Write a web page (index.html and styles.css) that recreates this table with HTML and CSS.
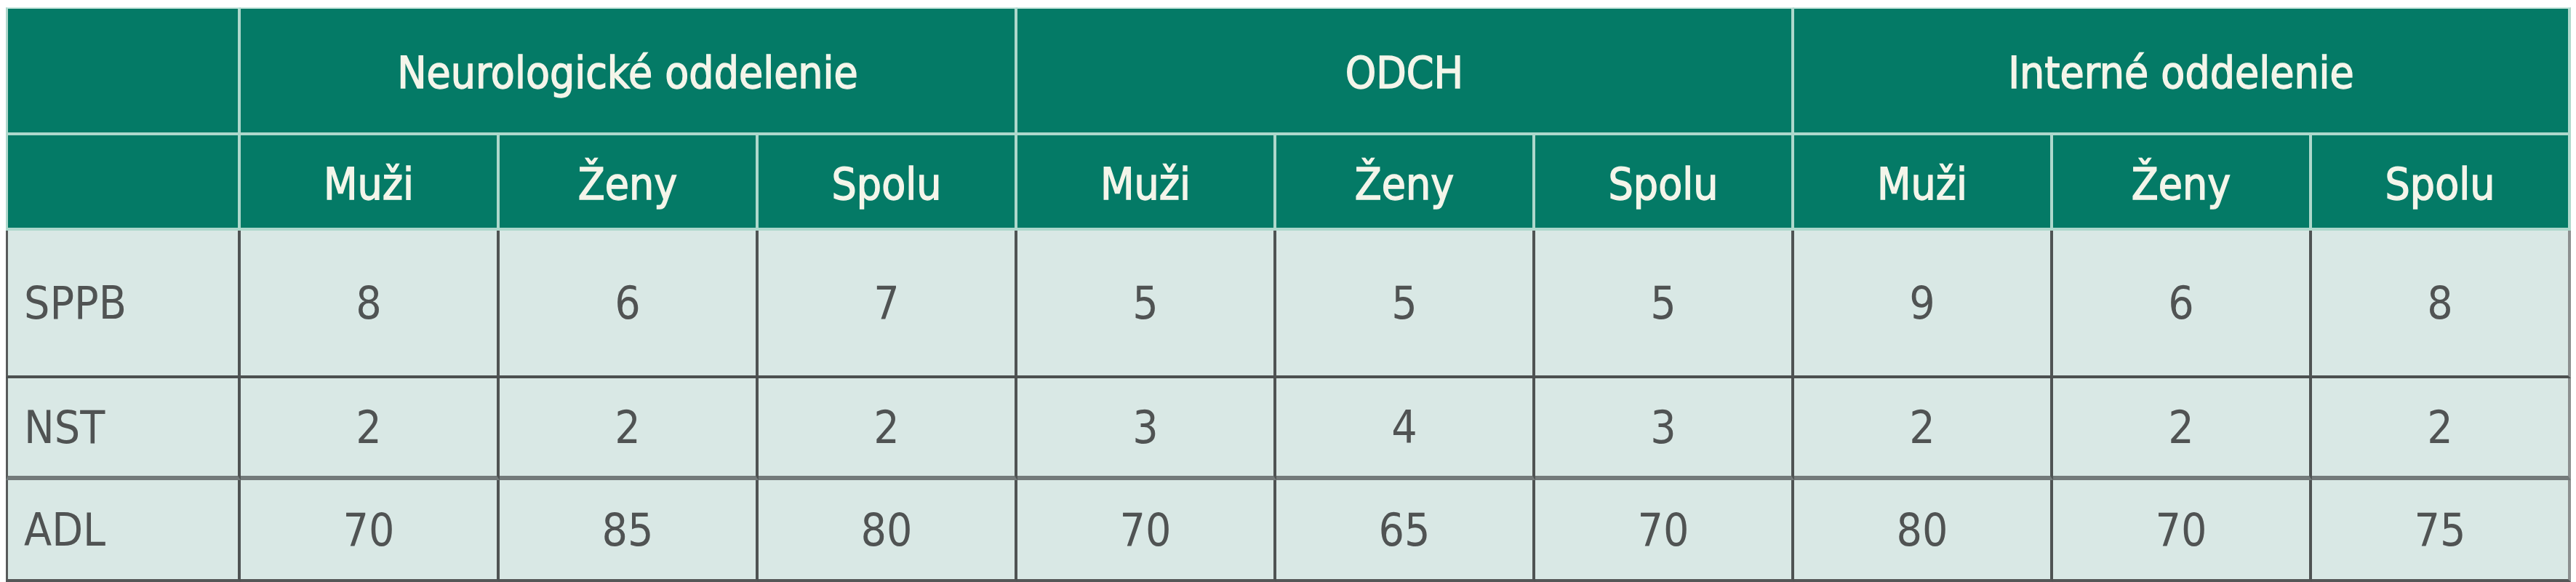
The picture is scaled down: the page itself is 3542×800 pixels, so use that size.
FILE: index.html
```html
<!DOCTYPE html>
<html lang="sk">
<head>
<meta charset="utf-8">
<title>Tabuľka</title>
<link rel="stylesheet" href="styles.css">
</head>
<body>
<div class="tbl">
  <div class="h h1 first"></div>
  <div class="h h1 grp">Neurologické oddelenie</div>
  <div class="h h1 grp">ODCH</div>
  <div class="h h1 grp">Interné oddelenie</div>

  <div class="h h2 first"></div>
  <div class="h h2">Muži</div>
  <div class="h h2">Ženy</div>
  <div class="h h2">Spolu</div>
  <div class="h h2">Muži</div>
  <div class="h h2">Ženy</div>
  <div class="h h2">Spolu</div>
  <div class="h h2">Muži</div>
  <div class="h h2">Ženy</div>
  <div class="h h2 last">Spolu</div>

  <div class="c r1 lab">SPPB</div>
  <div class="c r1">8</div><div class="c r1">6</div><div class="c r1">7</div>
  <div class="c r1">5</div><div class="c r1">5</div><div class="c r1">5</div>
  <div class="c r1">9</div><div class="c r1">6</div><div class="c r1 last">8</div>

  <div class="c r2 lab">NST</div>
  <div class="c r2">2</div><div class="c r2">2</div><div class="c r2">2</div>
  <div class="c r2">3</div><div class="c r2">4</div><div class="c r2">3</div>
  <div class="c r2">2</div><div class="c r2">2</div><div class="c r2 last">2</div>

  <div class="c r3 lab">ADL</div>
  <div class="c r3">70</div><div class="c r3">85</div><div class="c r3">80</div>
  <div class="c r3">70</div><div class="c r3">65</div><div class="c r3">70</div>
  <div class="c r3">80</div><div class="c r3">70</div><div class="c r3 last">75</div>
</div>
</body>
</html>
```

FILE: styles.css
```css
html, body {
  margin: 0;
  padding: 0;
  background: #ffffff;
}
body {
  padding: 10px 0 0 8px;
}
.tbl {
  display: grid;
  grid-template-columns: 323px repeat(9, 356px);
  grid-template-rows: 176px 131px 203px 140px 140px;
  font-family: "DejaVu Sans Condensed", "DejaVu Sans", sans-serif;
  font-stretch: condensed;
}
.h, .c {
  box-sizing: border-box;
  display: flex;
  align-items: center;
  justify-content: center;
}
.h {
  background: #047a66;
  color: #f4f5ea;
  font-size: 60px;
  -webkit-text-stroke: 1.4px #f4f5ea;
  padding-top: 6px;
  border-right: 4px solid #aed8cc;
  border-bottom: 4px solid #aed8cc;
}
.h1 {
  border-top: 2px solid #c9e6de;
}
.h.first {
  border-left: 3px solid #aed8cc;
}
.grp {
  grid-column: span 3;
}
.c {
  background: #d9e8e5;
  color: #505353;
  font-size: 62px;
  border-right: 4px solid #4f5353;
  border-bottom: 4px solid #4c5050;
}
.c.lab {
  justify-content: flex-start;
  padding-left: 22px;
  border-left: 3px solid #585b5b;
}
.c.last {
  border-right-color: #8c9090;
}
.r2 {
  border-bottom: 6px solid #737a7a;
}
.r3 {
  border-bottom-color: #545757;
}
```
